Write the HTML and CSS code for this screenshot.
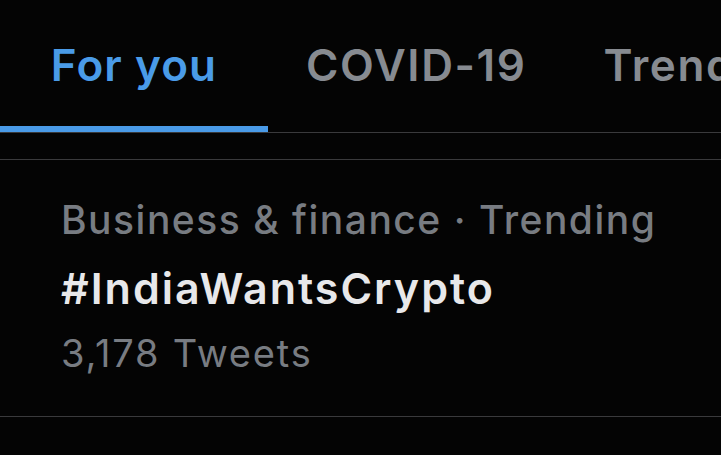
FILE: index.html
```html
<!DOCTYPE html>
<html>
<head>
<meta charset="utf-8">
<link rel="stylesheet" href="styles.css">
</head>
<body>
<div class="screen">
  <nav class="tabs">
    <div class="tab tab-active"><span class="tab-label">For you</span></div>
    <div class="tab"><span class="tab-label">COVID-19</span></div>
    <div class="tab"><span class="tab-label">Trending</span></div>
  </nav>
  <div class="spacer"></div>
  <div class="trend">
    <div class="trend-meta">Business &amp; finance · Trending</div>
    <div class="trend-title">#IndiaWantsCrypto</div>
    <div class="trend-count">3,178 Tweets</div>
  </div>
</div>
</body>
</html>
```
FILE: styles.css
```css
html, body {
  margin: 0;
  padding: 0;
  background: #040404;
}
.screen {
  width: 721px;
  height: 455px;
  overflow: hidden;
  font-family: Inter, "Liberation Sans", sans-serif;
}
.tabs {
  display: flex;
  height: 132px;
  border-bottom: 1px solid #3a3a3c;
  white-space: nowrap;
}
.tab {
  flex: none;
  padding: 0 39px 0 38px;
  display: flex;
  flex-direction: column;
  box-sizing: border-box;
  height: 132px;
}
.tab-label {
  display: block;
  margin-top: 37px;
  font-size: 44px;
  font-weight: 600;
  line-height: 56px;
  color: #878b91;
  letter-spacing: 1.6px;
}
.tab-active {
  width: 268px;
  padding: 0;
  align-items: center;
  border-bottom: 6px solid #4a9be8;
}
.tab-active .tab-label {
  color: #4a9be8;
  letter-spacing: 1.1px;
}
.spacer {
  height: 26px;
  border-bottom: 1px solid #3a3a3c;
}
.trend {
  height: 257px;
  box-sizing: border-box;
  padding: 37px 0 0 61px;
  border-bottom: 1px solid #3a3a3c;
}
.trend-meta {
  font-size: 39px;
  font-weight: 500;
  line-height: 46px;
  color: #787c82;
  letter-spacing: 1.5px;
}
.trend-title {
  margin-top: 19px;
  font-size: 43px;
  font-weight: 600;
  line-height: 52px;
  color: #e8e8ea;
  letter-spacing: 2px;
}
.trend-count {
  margin-top: 16px;
  font-size: 38px;
  font-weight: 400;
  line-height: 46px;
  color: #787c82;
  letter-spacing: 1.8px;
}
```
